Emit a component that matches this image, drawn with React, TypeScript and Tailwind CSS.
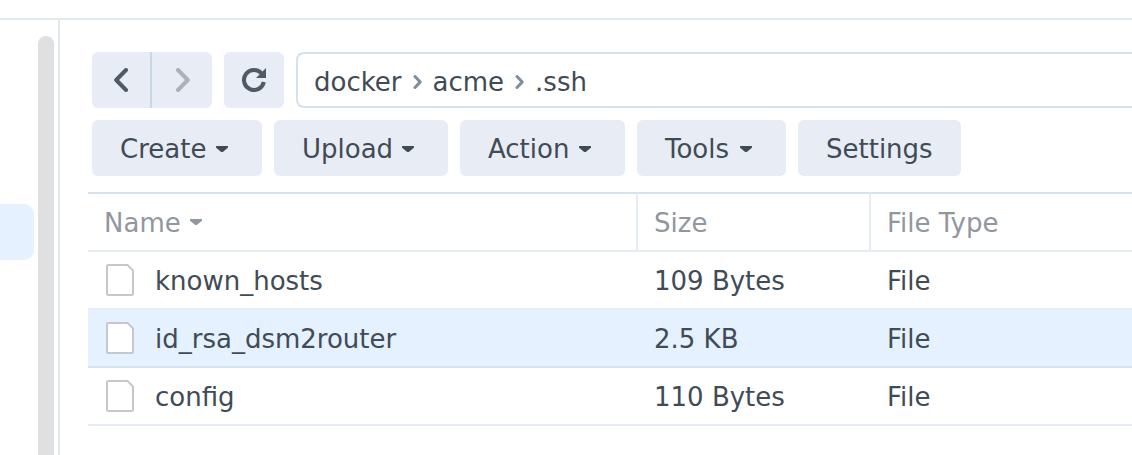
import { Fragment } from "react";

const folders = ["docker", "acme", ".ssh"];

const menus = [
  { label: "Create", width: "w-[170px]" },
  { label: "Upload", width: "w-[174px]" },
  { label: "Action", width: "w-[165px]" },
  { label: "Tools", width: "w-[149px]" },
];

const files = [
  { name: "known_hosts", size: "109 Bytes", type: "File", selected: false },
  { name: "id_rsa_dsm2router", size: "2.5 KB", type: "File", selected: true },
  { name: "config", size: "110 Bytes", type: "File", selected: false },
];

function Caret() {
  return (
    <svg width="12" height="6" viewBox="0 0 12 6" fill="currentColor" className="shrink-0" aria-hidden="true">
      <path d="M0.4 0h11.2a.4.4 0 0 1 .4.4v.8a1 1 0 0 1-.4.8L7.4 5.4a2.2 2.2 0 0 1-2.8 0L.4 2a1 1 0 0 1-.4-.8V.4A.4.4 0 0 1 .4 0z" />
    </svg>
  );
}

function Chevron({ flip = false }: { flip?: boolean }) {
  return (
    <svg
      width="14"
      height="24"
      viewBox="0 0 14 24"
      fill="none"
      stroke="currentColor"
      strokeWidth="4"
      strokeLinecap="round"
      strokeLinejoin="round"
      aria-hidden="true"
    >
      {flip ? <path d="M2 2l9.8 10L2 22" /> : <path d="M12 2 2.2 12 12 22" />}
    </svg>
  );
}

function RefreshIcon() {
  return (
    <svg width="24" height="24" viewBox="0 0 24 24" aria-hidden="true">
      <path d="M19.6 5.5A10 10 0 1 0 21.8 14" fill="none" stroke="currentColor" strokeWidth="4" />
      <path d="M24 0v10H14z" fill="currentColor" />
    </svg>
  );
}

function FileIcon() {
  return (
    <svg width="28" height="32" viewBox="0 0 28 32" className="shrink-0" aria-hidden="true">
      <path
        d="M2 1h19.5L27 6.5V30a1 1 0 0 1-1 1H2a1 1 0 0 1-1-1V2a1 1 0 0 1 1-1z"
        fill="#fff"
        stroke="#c4c8cd"
        strokeWidth="2"
      />
    </svg>
  );
}

export default function App() {
  return (
    <div className="flex min-h-screen flex-col bg-white pt-[18px] font-['DejaVu_Sans',Verdana,sans-serif] text-[26px] leading-8 text-[#414b55]">
      <div className="flex grow border-t-2 border-[#e1e8ef]">
        <aside className="flex w-[60px] shrink-0 justify-between border-r-2 border-[#e1e8ef] pr-1">
          <div className="mt-[184px] h-14 w-[34px] rounded-r-[10px] bg-[#e5f1fe]" />
          <div className="mt-4 w-4 rounded-t-lg bg-[#e0e0e0]" />
        </aside>

        <main className="min-w-0 grow pt-8 pl-7">
          <div className="flex gap-3 pl-1">
            <div className="flex h-14 shrink-0 overflow-hidden rounded-md bg-[#e8edf5]">
              <button type="button" aria-label="Back" className="flex w-[60px] items-center justify-center border-r-2 border-[#c9d6e4] text-[#505a64]">
                <Chevron />
              </button>
              <button type="button" aria-label="Forward" disabled className="flex w-[60px] items-center justify-center pl-0.5 text-[#abb2ba]">
                <Chevron flip />
              </button>
            </div>
            <button type="button" aria-label="Refresh" className="flex h-14 w-[60px] shrink-0 items-center justify-center rounded-md bg-[#e8edf5] text-[#505a64]">
              <RefreshIcon />
            </button>
            <nav aria-label="Path" className="flex h-14 min-w-0 grow items-center gap-[11px] rounded-l-lg border-2 border-r-0 border-[#d5e1eb] px-4 pt-1">
              {folders.map((folder, i) => (
                <Fragment key={folder}>
                  {i > 0 && (
                    <svg
                      width="9"
                      height="14"
                      viewBox="0 0 9 14"
                      className="shrink-0"
                      fill="none"
                      stroke="#7d8d9d"
                      strokeWidth="3"
                      strokeLinecap="round"
                      strokeLinejoin="round"
                      aria-hidden="true"
                    >
                      <path d="M2 1.5 7.2 7 2 12.5" />
                    </svg>
                  )}
                  <a href="#">{folder}</a>
                </Fragment>
              ))}
            </nav>
          </div>

          <div className="mt-3 flex gap-3 pl-1">
            {menus.map((menu) => (
              <button
                key={menu.label}
                type="button"
                aria-haspopup="menu"
                className={`flex h-14 shrink-0 items-center justify-between rounded-md bg-[#e8edf5] pt-0.5 pr-[34px] pl-7 ${menu.width}`}
              >
                {menu.label}
                <Caret />
              </button>
            ))}
            <button type="button" className="h-14 shrink-0 rounded-md bg-[#e8edf5] px-7 pt-0.5">
              Settings
            </button>
          </div>

          <table className="mt-4 w-full table-fixed border-separate border-spacing-0 text-left">
            <thead className="text-[#92979e]">
              <tr className="h-[60px]">
                <th scope="col" aria-sort="ascending" className="w-[550px] border-y-2 border-r-2 border-t-[#d5e1eb] border-r-[#e6ecf3] border-b-[#e6ecf3] px-4 font-normal">
                  <span className="flex items-center gap-[9px]">
                    <span className="pt-0.5">Name</span>
                    <Caret />
                  </span>
                </th>
                <th scope="col" className="w-[233px] border-y-2 border-r-2 border-t-[#d5e1eb] border-r-[#e6ecf3] border-b-[#e6ecf3] px-4 pt-0.5 font-normal">
                  Size
                </th>
                <th scope="col" className="border-y-2 border-t-[#d5e1eb] border-b-[#e6ecf3] px-4 pt-0.5 font-normal">
                  File Type
                </th>
              </tr>
            </thead>
            <tbody>
              {files.map((file) => {
                const cell = file.selected
                  ? "border-b-2 border-[#d6e4f0] bg-[#e5f1fe] px-4"
                  : "border-b-2 border-[#e6ecf3] px-4";
                return (
                  <tr key={file.name} className="h-[58px]">
                    <td className={cell}>
                      <span className="flex items-center gap-[21px] pl-0.5">
                        <FileIcon />
                        <span className="pt-0.5">{file.name}</span>
                      </span>
                    </td>
                    <td className={`pt-0.5 ${cell}`}>{file.size}</td>
                    <td className={`pt-0.5 ${cell}`}>{file.type}</td>
                  </tr>
                );
              })}
            </tbody>
          </table>
        </main>
      </div>
    </div>
  );
}
